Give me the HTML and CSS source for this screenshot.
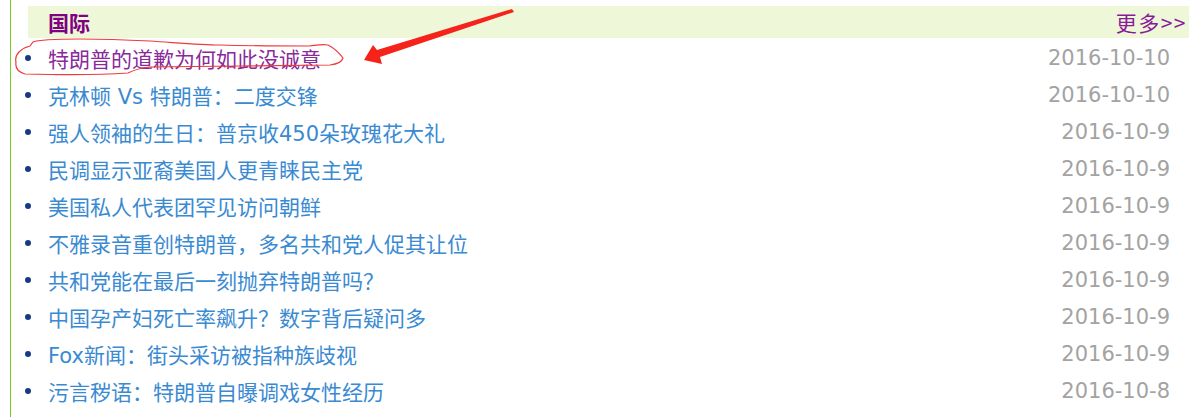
FILE: index.html
```html
<!DOCTYPE html>
<html lang="zh-CN">
<head>
<meta charset="utf-8">
<title>国际</title>
<link rel="stylesheet" href="styles.css">
</head>
<body>
<div class="box">
  <div class="head">
    <span class="title">国际</span>
    <a class="more" href="#">更多&gt;&gt;</a>
  </div>
  <ul class="news">
    <li><span class="dot"></span><a class="t visited" href="#">特朗普的道歉为何如此没诚意</a><span class="date">2016-10-10</span></li>
    <li><span class="dot"></span><a class="t" href="#">克林顿 Vs 特朗普：二度交锋</a><span class="date">2016-10-10</span></li>
    <li><span class="dot"></span><a class="t" href="#">强人领袖的生日：普京收450朵玫瑰花大礼</a><span class="date">2016-10-9</span></li>
    <li><span class="dot"></span><a class="t" href="#">民调显示亚裔美国人更青睐民主党</a><span class="date">2016-10-9</span></li>
    <li><span class="dot"></span><a class="t" href="#">美国私人代表团罕见访问朝鲜</a><span class="date">2016-10-9</span></li>
    <li><span class="dot"></span><a class="t" href="#">不雅录音重创特朗普，多名共和党人促其让位</a><span class="date">2016-10-9</span></li>
    <li><span class="dot"></span><a class="t" href="#">共和党能在最后一刻抛弃特朗普吗？</a><span class="date">2016-10-9</span></li>
    <li><span class="dot"></span><a class="t" href="#">中国孕产妇死亡率飙升？数字背后疑问多</a><span class="date">2016-10-9</span></li>
    <li><span class="dot"></span><a class="t" href="#">Fox新闻：街头采访被指种族歧视</a><span class="date">2016-10-9</span></li>
    <li><span class="dot"></span><a class="t" href="#">污言秽语：特朗普自曝调戏女性经历</a><span class="date">2016-10-8</span></li>
  </ul>
</div>
<svg class="mark" width="1200" height="417" viewBox="0 0 1200 417">
  <path d="M16 62 C14 54 22 48 30 46 L33 42 C40 39 60 39 80 39 C110 39 130 40 150 41 C180 43 200 45 220 45 C250 46 290 46 310 46 C318 45 322 44 328 45 C334 48 340 54 343 58 C342 62 338 64 330 65 C280 66 200 66 150 67 C140 68 132 71 128 73 C100 75 60 75 25 74 C18 72 15 68 16 62 Z" fill="none" stroke="#f03a3a" stroke-width="1.2"/>
  <polygon points="364,60 373,45 377,50 512,9 514,12 380,57 382,64" fill="#f5231a"/>
</svg>
</body>
</html>
```
FILE: styles.css
```css
html, body {
  margin: 0;
  padding: 0;
  background: #fff;
}
body {
  width: 1200px;
  height: 417px;
  overflow: hidden;
  position: relative;
  font-family: "DejaVu Sans", "Noto Sans CJK SC", sans-serif;
}
.box {
  margin-left: 10px;
  border-left: 1px solid #72d01e;
  height: 417px;
  padding-top: 6px;
  box-sizing: border-box;
}
.head {
  margin-left: 17px;
  width: 1161px;
  height: 32px;
  background: #eef8d9;
  display: flex;
  align-items: center;
  justify-content: space-between;
}
.title {
  margin-left: 20px;
  font-family: "Noto Sans CJK SC", sans-serif;
  font-weight: bold;
  font-size: 21px;
  color: #800080;
  line-height: 32px;
}
.more {
  font-family: "Noto Sans CJK SC", sans-serif;
  font-size: 21px;
  color: #8a1a9a;
  text-decoration: none;
  margin-right: 2px;
  letter-spacing: 1.5px;
  line-height: 32px;
}
.news {
  list-style: none;
  margin: 0;
  padding: 1px 0 0;
}
.news li {
  display: flex;
  align-items: center;
  height: 37px;
  padding-left: 14px;
  width: 1145px;
}
.dot {
  width: 6px;
  height: 6px;
  border-radius: 50%;
  background: #173a86;
  flex: none;
  margin-right: 17px;
}
.t {
  font-size: 21px;
  color: #3a8ad2;
  text-decoration: none;
  flex: 1;
  white-space: nowrap;
}
.t.visited {
  color: #8a2a9a;
}
.date {
  font-size: 21px;
  color: #a3a3a3;
}
.mark {
  position: absolute;
  left: 0;
  top: 0;
  pointer-events: none;
}
```
